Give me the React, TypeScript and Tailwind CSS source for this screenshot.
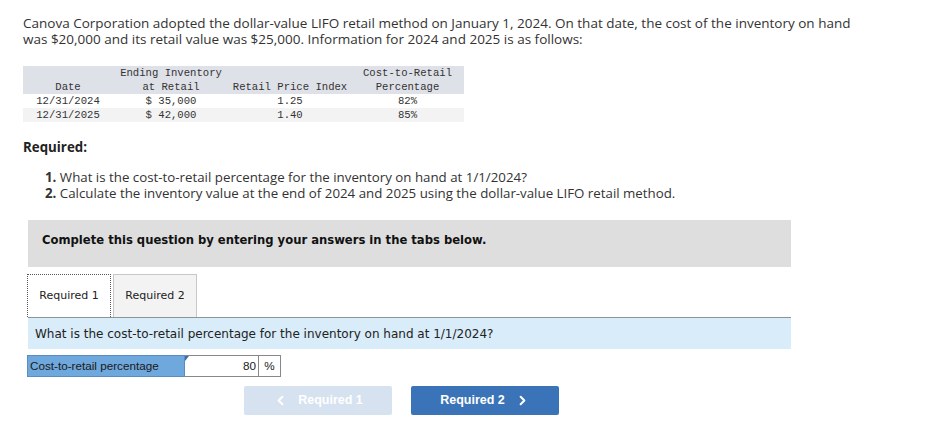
import { ChevronLeft, ChevronRight } from "lucide-react";

const rows = [
  { date: "12/31/2024", retail: "$ 35,000", index: "1.25", pct: "82%", bg: "bg-white" },
  { date: "12/31/2025", retail: "$ 42,000", index: "1.40", pct: "85%", bg: "bg-[#f3f3f3]" },
];

export default function App() {
  return (
    <div className="w-[929px] h-[446px] bg-white overflow-hidden">
      {/* problem statement */}
      <div className="pl-[23px] pt-[15px] text-[13.5px] leading-[16px] text-[#333] font-['Open_Sans',sans-serif] w-[868px]">
        Canova Corporation adopted the dollar-value LIFO retail method on January 1, 2024. On that date, the cost of the inventory on hand was
        $20,000 and its retail value was $25,000. Information for 2024 and 2025 is as follows:
      </div>

      {/* data table */}
      <table className="ml-[23px] mt-[19px] w-[441px] border-collapse font-['Liberation_Mono',monospace] text-[10.6px] leading-[14px] text-[#333]">
        <thead>
          <tr className="bg-[#dfe1e8]">
            <th className="w-[90px] font-normal align-bottom pt-[1px]">Date</th>
            <th className="w-[116px] font-normal align-bottom">
              Ending Inventory
              <br />
              at Retail
            </th>
            <th className="w-[122px] font-normal align-bottom">Retail Price Index</th>
            <th className="font-normal align-bottom">
              Cost-to-Retail
              <br />
              Percentage
            </th>
          </tr>
        </thead>
        <tbody>
          {rows.map((r) => (
            <tr key={r.date} className={r.bg}>
              <td className="text-center">{r.date}</td>
              <td className="text-center">{r.retail}</td>
              <td className="text-center">{r.index}</td>
              <td className="text-center">{r.pct}</td>
            </tr>
          ))}
        </tbody>
      </table>

      {/* required */}
      <div className="pl-[23px] mt-[17px] font-['Open_Sans',sans-serif] text-[#333]">
        <div className="text-[13.3px] font-bold leading-[16px] text-[#222]">Required:</div>
        <ol className="mt-[14px] pl-[22px] text-[13.3px] leading-[16px]">
          <li>
            <span className="font-bold">1.</span> What is the cost-to-retail percentage for the inventory on hand at 1/1/2024?
          </li>
          <li>
            <span className="font-bold">2.</span> Calculate the inventory value at the end of 2024 and 2025 using the dollar-value LIFO retail method.
          </li>
        </ol>
      </div>

      {/* answer area */}
      <div className="ml-[28px] mt-[19px] w-[763px] font-['DejaVu_Sans',sans-serif]">
        <div className="h-[47px] bg-[#dedede] flex items-center pl-[14px] pb-[5px] text-[11.6px] font-bold text-[#111]">
          Complete this question by entering your answers in the tabs below.
        </div>

        <div className="mt-[7px] flex items-end gap-[2px] -ml-[1px]">
          <div className="w-[84px] h-[43px] bg-white border border-dotted border-[#555] border-b-0 flex items-center justify-center pt-[1px] text-[11px] text-[#222]">
            Required 1
          </div>
          <div className="w-[84px] h-[43px] bg-[#f3f3f3] border border-[#c8c8c8] border-b-0 flex items-center justify-center pt-[1px] text-[11px] text-[#222]">
            Required 2
          </div>
        </div>

        <div className="h-[32px] bg-[#d9ecf9] border-t border-[#8c9399] flex items-center pl-[7px] text-[12px] text-[#222]">
          What is the cost-to-retail percentage for the inventory on hand at 1/1/2024?
        </div>

        <div className="mt-[6px] -ml-[1px] flex h-[22px] font-['Liberation_Sans',sans-serif] text-[11.7px] text-[#1a1a1a]">
          <div className="w-[158px] bg-[#6fa8dc] border border-[#5b8ec0] flex items-center pl-[2px]">
            Cost-to-retail percentage
          </div>
          <div className="relative w-[74px] bg-white border border-[#888] border-l-0 flex items-center justify-end pr-[2px]">
            <span className="absolute left-0 top-0 w-0 h-0 border-t-[5px] border-t-[#3b6fa8] border-r-[4px] border-r-transparent" />
            80
          </div>
          <div className="w-[22px] bg-white border border-[#888] border-l-0 flex items-center justify-center">%</div>
        </div>

        <div className="mt-[9px] flex gap-[19px] pl-[216px] font-['Liberation_Sans',sans-serif] text-[12.5px] font-bold text-white">
          <div className="w-[148px] h-[29px] bg-[#d6e2f0] rounded-[2px] flex items-center justify-center gap-[10px]">
            <ChevronLeft size={15} strokeWidth={3.2} />
            <span>Required 1</span>
          </div>
          <div className="w-[148px] h-[29px] bg-[#3b73b9] rounded-[2px] flex items-center justify-center gap-[10px]">
            <span>Required 2</span>
            <ChevronRight size={15} strokeWidth={3.2} />
          </div>
        </div>
      </div>
    </div>
  );
}
